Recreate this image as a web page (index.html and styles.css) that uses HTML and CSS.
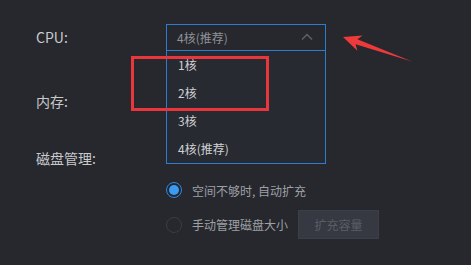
FILE: index.html
```html
<!DOCTYPE html>
<html lang="zh-CN">
<head>
<meta charset="utf-8">
<title>设置</title>
<link rel="stylesheet" href="styles.css">
</head>
<body>
<div class="page">
  <div class="row row-cpu">
    <div class="label">CPU:</div>
    <div class="field">
      <div class="select open">
        <span class="select-value">4核(推荐)</span>
        <svg class="chevron" width="12" height="8" viewBox="0 0 12 8"><path d="M1 6.5 L6 1.5 L11 6.5" fill="none" stroke="#5d6068" stroke-width="1.5"/></svg>
      </div>
      <ul class="menu">
        <li>1核</li>
        <li>2核</li>
        <li>3核</li>
        <li>4核(推荐)</li>
      </ul>
    </div>
  </div>
  <div class="row row-mem">
    <div class="label">内存:</div>
  </div>
  <div class="row row-disk">
    <div class="label">磁盘管理:</div>
  </div>
  <div class="options">
    <div class="option opt-auto">
      <span class="radio checked"><span class="dot"></span></span>
      <span class="opt-text">空间不够时, 自动扩充</span>
    </div>
    <div class="option opt-manual">
      <span class="radio"></span>
      <span class="opt-text">手动管理磁盘大小</span>
      <button class="btn" disabled>扩充容量</button>
    </div>
  </div>

  <div class="mark-box"></div>
  <svg class="mark-arrow" width="471" height="265" viewBox="0 0 471 265">
    <polygon points="343,37 362.6,35.4 357.4,39.2 412,61.5 355.6,44.2 357.4,50.8" fill="#ee3a3a"/>
  </svg>
</div>
</body>
</html>
```

FILE: styles.css
```css
html, body {
  margin: 0;
  padding: 0;
}
body {
  background: #26282e;
  font-family: "Noto Sans CJK SC", "Noto Sans", sans-serif;
  color: #c9cacd;
  width: 471px;
  height: 265px;
  overflow: hidden;
}
.page {
  position: relative;
  width: 471px;
  height: 265px;
  padding-left: 36px;
  box-sizing: border-box;
}
.row {
  display: flex;
  align-items: center;
}
.label {
  width: 130px;
  font-size: 14px;
  line-height: 28px;
  color: #c9cacd;
}
.row-cpu {
  padding-top: 24px;
  height: 27px;
}
.row-cpu .label {
  line-height: 29px;
}
.row-mem {
  margin-top: 36px;
  height: 28px;
}
.row-disk {
  margin-top: 29px;
  height: 28px;
}
.field {
  position: relative;
}
.select {
  width: 160px;
  height: 27px;
  box-sizing: border-box;
  border: 1px solid #2c7cd0;
  display: flex;
  align-items: center;
  justify-content: space-between;
  padding: 0 12px 0 10px;
}
.select-value {
  font-size: 12px;
  color: #8f9197;
}
.chevron {
  display: block;
  margin-top: -2px;
}
.menu {
  position: absolute;
  left: 0;
  top: 27px;
  width: 160px;
  box-sizing: border-box;
  margin: 0;
  padding: 0;
  list-style: none;
  background: #282a31;
  border: 1px solid #2c7cd0;
  border-top: none;
  z-index: 2;
}
.menu li {
  height: 28px;
  line-height: 28px;
  padding-left: 11px;
  font-size: 12px;
  color: #cfd0d3;
}
.options {
  padding-left: 130px;
  margin-top: 4px;
}
.option {
  display: flex;
  align-items: center;
}
.opt-auto {
  height: 28px;
}
.opt-manual {
  margin-top: 6px;
  height: 29px;
}
.radio {
  width: 16px;
  height: 16px;
  box-sizing: border-box;
  border-radius: 50%;
  border: 1px solid #3a3d44;
  display: flex;
  align-items: center;
  justify-content: center;
  margin-right: 10px;
}
.radio.checked {
  border: 1.5px solid #2e86de;
}
.dot {
  width: 10px;
  height: 10px;
  border-radius: 50%;
  background: #3a9bf4;
}
.opt-text {
  font-size: 12px;
  color: #9ea0a5;
}
.btn {
  margin-left: 10px;
  width: 81px;
  height: 29px;
  background: #363941;
  border: 1px solid #3c3f47;
  color: #5b5e66;
  font-family: "Noto Sans CJK SC", "Noto Sans", sans-serif;
  font-size: 12px;
  padding: 0;
}
.mark-box {
  position: absolute;
  left: 131px;
  top: 56px;
  width: 138px;
  height: 55px;
  box-sizing: border-box;
  border: 3px solid #e8363c;
  z-index: 3;
}
.mark-arrow {
  position: absolute;
  left: 0;
  top: 0;
  z-index: 3;
  pointer-events: none;
}
```
